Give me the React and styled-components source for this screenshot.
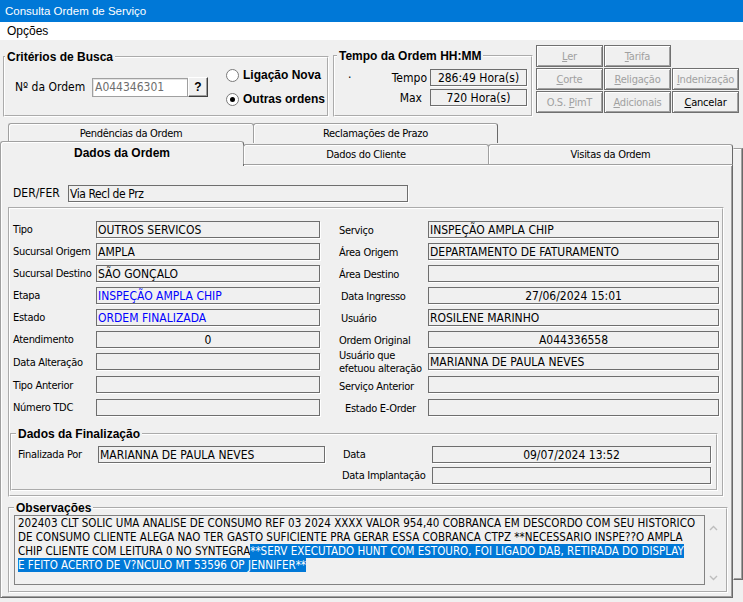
import React from "react";
import styled, { createGlobalStyle } from "styled-components";

const NARROW = `"DejaVu Sans Condensed", "Liberation Sans Narrow", "Liberation Sans", sans-serif`;
const SANS = `"Liberation Sans", Arial, sans-serif`;

const GlobalStyle = createGlobalStyle`
  * { box-sizing: border-box; }
  html, body { margin: 0; padding: 0; background: #f0f0f0; }
  body { font-family: ${NARROW}; font-size: 12px; color: #000; }
`;

const Window = styled.div`
  width: 743px;
  height: 602px;
  overflow: hidden;
  display: flex;
  flex-direction: column;
  background: #f0f0f0;
`;

const TitleBar = styled.div`
  flex: none;
  height: 22px;
  display: flex;
  align-items: center;
  padding-left: 5px;
  background: #0078d7;
  color: #fff;
  font-family: ${SANS};
  font-size: 11.5px;
`;

const MenuBar = styled.div`
  flex: none;
  height: 18px;
  display: flex;
  align-items: center;
  padding-left: 7px;
  background: #fff;
  font-family: ${SANS};
  font-size: 12px;
`;

const TopArea = styled.div`
  flex: none;
  height: 83px;
  display: flex;
  align-items: flex-start;
`;

const Group = styled.fieldset`
  flex: none;
  margin: ${(p) => p.$margin || "0"};
  padding: 0;
  min-width: 0;
  width: ${(p) => p.$w}px;
  height: ${(p) => (p.$h ? `${p.$h}px` : "auto")};
  border: 2px groove #fff;
`;

const Legend = styled.legend`
  margin-left: ${(p) => p.$x || 0}px;
  padding: 0 2px;
  font-family: ${SANS};
  font-weight: bold;
  font-size: 12px;
  line-height: 14px;
`;

/* ---- Critérios de Busca ---- */
const CriteriaBody = styled.div`
  height: 51px;
  display: flex;
  align-items: center;
  padding: 0 0 5px 10px;
`;

const OrderLabel = styled.span`
  width: 77px;
`;

const OrderInput = styled.div`
  width: 96px;
  height: 19px;
  display: flex;
  align-items: center;
  padding-left: 2px;
  background: #fff;
  color: #6d6d6d;
  border: 1px solid #a0a0a0;
  box-shadow: inset 1px 1px 0 #e3e3e3;
`;

const QButton = styled.div`
  width: 20px;
  height: 20px;
  display: flex;
  align-items: center;
  justify-content: center;
  font-family: ${SANS};
  font-weight: bold;
  font-size: 12px;
  border: 1px solid;
  border-color: #fff #404040 #404040 #fff;
  box-shadow: inset -1px -1px 0 #a0a0a0;
`;

const Radios = styled.div`
  margin-left: 18px;
  display: flex;
  flex-direction: column;
  gap: 6px;
`;

const RadioItem = styled.label`
  height: 18px;
  display: flex;
  align-items: center;
  gap: 4px;
  font-family: ${SANS};
  font-weight: bold;
  font-size: 12px;
`;

const RadioCircle = styled.span`
  width: 13px;
  height: 13px;
  border-radius: 50%;
  border: 1px solid #7a7a7a;
  background: #fff;
  display: flex;
  align-items: center;
  justify-content: center;

  &::after {
    content: "";
    width: 5px;
    height: 5px;
    border-radius: 50%;
    background: ${(p) => (p.$checked ? "#000" : "transparent")};
  }
`;

/* ---- Tempo da Ordem ---- */
const TempoBody = styled.div`
  height: 52px;
  padding-top: 6px;
  display: grid;
  grid-template-columns: 92px 97px;
  grid-auto-rows: 17px;
  column-gap: 3px;
  row-gap: 3px;
`;

const TempoLabel = styled.div`
  display: flex;
  align-items: center;
  justify-content: ${(p) => (p.$dot ? "space-between" : "flex-end")};
  padding-right: ${(p) => p.$pr || 0}px;
`;

const Dot = styled.span`
  margin-left: 13px;
  margin-top: -8px;
`;

/* ---- Buttons ---- */
const ButtonGrid = styled.div`
  margin: 5px 0 0 3px;
  display: grid;
  grid-template-columns: repeat(3, 67px);
  grid-auto-rows: 22px;
  gap: 1px;
`;

const Btn = styled.div`
  display: flex;
  align-items: center;
  justify-content: center;
  font-size: 11px;
  letter-spacing: -0.2px;
  white-space: pre;
  color: ${(p) => (p.$enabled ? "#000" : "#a0a0a0")};
  border: 1px solid #707070;
  box-shadow: inset 1px 1px 0 #fff, inset -1px -1px 0 #a0a0a0;
`;

/* ---- Tabs ---- */
const BackTabs = styled.div`
  flex: none;
  height: 20px;
  display: flex;
  padding-left: 8px;
`;

const FrontTabs = styled.div`
  flex: none;
  height: 22px;
  margin-bottom: -1px;
  display: flex;
  align-items: flex-start;
  position: relative;
  z-index: 1;
`;

const Tab = styled.div`
  width: ${(p) => p.$w}px;
  height: ${(p) => (p.$active ? 25 : 20)}px;
  margin-top: ${(p) => (p.$active ? -2 : p.$front ? 1 : 0)}px;
  margin-left: ${(p) => (p.$first ? 0 : -1)}px;
  display: flex;
  align-items: center;
  justify-content: center;
  padding-bottom: ${(p) => (p.$active ? 3 : 1)}px;
  background: #f0f0f0;
  font-family: ${(p) => (p.$active ? SANS : NARROW)};
  font-weight: ${(p) => (p.$active ? "bold" : "normal")};
  font-size: ${(p) => (p.$active ? 12 : 11)}px;
  letter-spacing: ${(p) => (p.$active ? 0 : -0.3)}px;
  border: 1px solid;
  border-color: #a0a0a0 #696969 transparent #a0a0a0;
  border-bottom: none;
  border-radius: 3px 3px 0 0;
  box-shadow: inset 1px 1px 0 #fff;
`;

const PanelWrap = styled.div`
  flex: 1;
  display: flex;
  align-items: flex-start;
`;

const Panel = styled.div`
  width: 733px;
  height: 434px;
  border: 1px solid;
  border-color: #a0a0a0 #696969 #696969 #a0a0a0;
  box-shadow: inset 1px 1px 0 #fff, inset -1px -1px 0 #a0a0a0;
`;

const BackEdge = styled.div`
  width: 10px;
  height: 432px;
  margin-top: -16px;
  border: 1px solid;
  border-color: #a0a0a0 #696969 #696969 transparent;
  box-shadow: inset -1px -1px 0 #a0a0a0, inset 0 1px 0 #fff;
`;

const DerRow = styled.div`
  margin-top: 20px;
  height: 17px;
  display: flex;
  align-items: center;
  padding-left: 12px;
`;

const Field = styled.div`
  width: ${(p) => (p.$w ? `${p.$w}px` : "auto")};
  height: 17px;
  align-self: start;
  display: flex;
  align-items: center;
  justify-content: ${(p) => (p.$center ? "center" : "flex-start")};
  padding: 0 1px;
  white-space: nowrap;
  overflow: hidden;
  letter-spacing: ${(p) => p.$ls || 0}px;
  color: ${(p) => (p.$blue ? "#0000ff" : "#000")};
  border: 1px solid #6e6e6e;
  box-shadow: 1px 1px 0 #fff;
`;

const Label = styled.div`
  width: ${(p) => (p.$w ? `${p.$w}px` : "auto")};
  display: flex;
  align-items: center;
  padding-left: ${(p) => p.$pl || 0}px;
  padding-top: ${(p) => p.$pt || 0}px;
  font-size: ${(p) => p.$size || 11}px;
  letter-spacing: ${(p) => (p.$size ? 0 : -0.3)}px;
  line-height: 13px;
  white-space: pre;
`;

const FormGrid = styled.div`
  margin: 12px 0 0 3px;
  display: grid;
  grid-template-columns: 83px 224px 108px 291px;
  grid-template-rows: repeat(6, 17px) 18px 18px 17px;
  row-gap: 5px;
`;

const FinalGrid = styled.div`
  padding: 5px 0 0 6px;
  height: 48px;
  display: grid;
  grid-template-columns: 80px 227px 107px 279px;
  grid-template-rows: 17px 17px;
  row-gap: 4px;
`;

const ObsBody = styled.div`
  height: 76px;
  display: flex;
  align-items: flex-start;
  padding-left: 4px;
`;

const ObsText = styled.div`
  width: 691px;
  height: 70px;
  padding: 0 3px;
  border: 1px solid #828282;
  font-size: 11.5px;
  line-height: 14px;
  overflow: hidden;
`;

const ObsLine = styled.div`
  white-space: nowrap;
`;

const Selected = styled.span`
  background: #0078d7;
  color: #fff;
`;

const ScrollCol = styled.div`
  width: 17px;
  height: 70px;
  display: flex;
  flex-direction: column;
  align-items: center;
  justify-content: space-between;
  padding: 10px 0 4px;
`;

const Chevron = ({ up }) => (
  <svg width="9" height="6" viewBox="0 0 9 6">
    <path
      d={up ? "M1 5 L4.5 1.5 L8 5" : "M1 1 L4.5 4.5 L8 1"}
      fill="none"
      stroke="#bdbdbd"
      strokeWidth="1.4"
    />
  </svg>
);

const buttons = [
  { u: "L", rest: "er" },
  { u: "T", rest: "arifa" },
  null,
  { u: "C", rest: "orte" },
  { u: "R", rest: "eligação" },
  { u: "I", rest: "ndenização" },
  { pre: "O.S. ", u: "P", rest: "imT" },
  { u: "A", rest: "dicionais" },
  { u: "C", rest: "ancelar", enabled: true },
];

const rows = [
  ["Tipo", { v: "OUTROS SERVICOS" }, "Serviço", 0, { v: "INSPEÇÃO AMPLA CHIP" }],
  ["Sucursal Origem", { v: "AMPLA" }, "Área Origem", 0, { v: "DEPARTAMENTO DE FATURAMENTO" }],
  ["Sucursal Destino", { v: "SÃO GONÇALO" }, "Área Destino", 0, { v: "" }],
  ["Etapa", { v: "INSPEÇÃO AMPLA CHIP", blue: true }, "Data Ingresso", 2, { v: "27/06/2024 15:01", center: true }],
  ["Estado", { v: "ORDEM FINALIZADA", blue: true }, "Usuário", 2, { v: "ROSILENE MARINHO" }],
  ["Atendimento", { v: "0", center: true }, "Ordem Original", 0, { v: "A044336558", center: true }],
  ["Data Alteração", { v: "" }, "Usuário que\nefetuou alteração", 0, { v: "MARIANNA DE PAULA NEVES" }],
  ["Tipo Anterior", { v: "" }, "Serviço Anterior", 0, { v: "" }],
  ["Número TDC", { v: "" }, "Estado E-Order", 6, { v: "" }],
];

export default function App() {
  return (
    <>
      <GlobalStyle />
      <Window>
        <TitleBar>Consulta Ordem de Serviço</TitleBar>
        <MenuBar>Opções</MenuBar>

        <TopArea>
          <Group $w={326} $margin="10px 0 0 3px">
            <Legend>Critérios de Busca</Legend>
            <CriteriaBody>
              <OrderLabel>Nº da Ordem</OrderLabel>
              <OrderInput>A044346301</OrderInput>
              <QButton>?</QButton>
              <Radios>
                <RadioItem>
                  <RadioCircle />
                  Ligação Nova
                </RadioItem>
                <RadioItem>
                  <RadioCircle $checked />
                  Outras ordens
                </RadioItem>
              </Radios>
            </CriteriaBody>
          </Group>

          <Group $w={200} $margin="9px 0 0 4px">
            <Legend $x={2}>Tempo da Ordem HH:MM</Legend>
            <TempoBody>
              <TempoLabel $dot>
                <Dot>.</Dot>
                <span>Tempo</span>
              </TempoLabel>
              <Field $center>286:49 Hora(s)</Field>
              <TempoLabel $pr={5}>Max</TempoLabel>
              <Field $center>720 Hora(s)</Field>
            </TempoBody>
          </Group>

          <ButtonGrid>
            {buttons.map((b, i) =>
              b ? (
                <Btn key={i} $enabled={b.enabled}>
                  <span>
                    {b.pre}
                    <u>{b.u}</u>
                    {b.rest}
                  </span>
                </Btn>
              ) : (
                <span key={i} />
              )
            )}
          </ButtonGrid>
        </TopArea>

        <BackTabs>
          <Tab $w={246} $first>Pendências da Ordem</Tab>
          <Tab $w={245}>Reclamações de Prazo</Tab>
        </BackTabs>
        <FrontTabs>
          <Tab $w={244} $first $active>Dados da Ordem</Tab>
          <Tab $w={246} $front>Dados do Cliente</Tab>
          <Tab $w={245} $front>Visitas da Ordem</Tab>
        </FrontTabs>

        <PanelWrap>
          <Panel>
            <DerRow>
              <Label $w={55} $size={12}>DER/FER</Label>
              <Field $w={340} $ls={-0.4}>Via Recl de Prz</Field>
            </DerRow>

            <Group $w={716} $h={290} $margin="5px 0 0 7px">
              <FormGrid>
                {rows.map(([l, lf, r, ind, rf], i) => (
                  <React.Fragment key={i}>
                    <Label>{l}</Label>
                    <Field $blue={lf.blue} $center={lf.center}>{lf.v}</Field>
                    <Label $pl={19 + ind} $pt={i === 6 ? 0 : 2}>{r}</Label>
                    <Field $blue={rf.blue} $center={rf.center}>{rf.v}</Field>
                  </React.Fragment>
                ))}
              </FormGrid>

              <Group $w={708} $margin="11px 0 0 0">
                <Legend $x={4}>Dados da Finalização</Legend>
                <FinalGrid>
                  <Label>Finalizada Por</Label>
                  <Field>MARIANNA DE PAULA NEVES</Field>
                  <Label $pl={18}>Data</Label>
                  <Field $center>09/07/2024 13:52</Field>
                  <span />
                  <span />
                  <Label $pl={17}>Data Implantação</Label>
                  <Field />
                </FinalGrid>
              </Group>
            </Group>

            <Group $w={720} $margin="4px 0 0 7px">
              <Legend $x={4}>Observações</Legend>
              <ObsBody>
                <ObsText>
                  <ObsLine>
                    202403 CLT SOLIC UMA ANALISE DE CONSUMO REF 03 2024 XXXX VALOR 954,40 COBRANCA EM DESCORDO COM SEU HISTORICO
                  </ObsLine>
                  <ObsLine>
                    DE CONSUMO CLIENTE ALEGA NAO TER GASTO SUFICIENTE PRA GERAR ESSA COBRANCA CTPZ **NECESSARIO INSPE??O AMPLA
                  </ObsLine>
                  <ObsLine>
                    CHIP CLIENTE COM LEITURA 0 NO SYNTEGRA
                    <Selected>**SERV EXECUTADO HUNT COM ESTOURO, FOI LIGADO DAB, RETIRADA DO DISPLAY</Selected>
                  </ObsLine>
                  <ObsLine>
                    <Selected>E FEITO ACERTO DE V?NCULO MT 53596 OP JENNIFER**</Selected>
                  </ObsLine>
                </ObsText>
                <ScrollCol>
                  <Chevron up />
                  <Chevron />
                </ScrollCol>
              </ObsBody>
            </Group>
          </Panel>
          <BackEdge />
        </PanelWrap>
      </Window>
    </>
  );
}
